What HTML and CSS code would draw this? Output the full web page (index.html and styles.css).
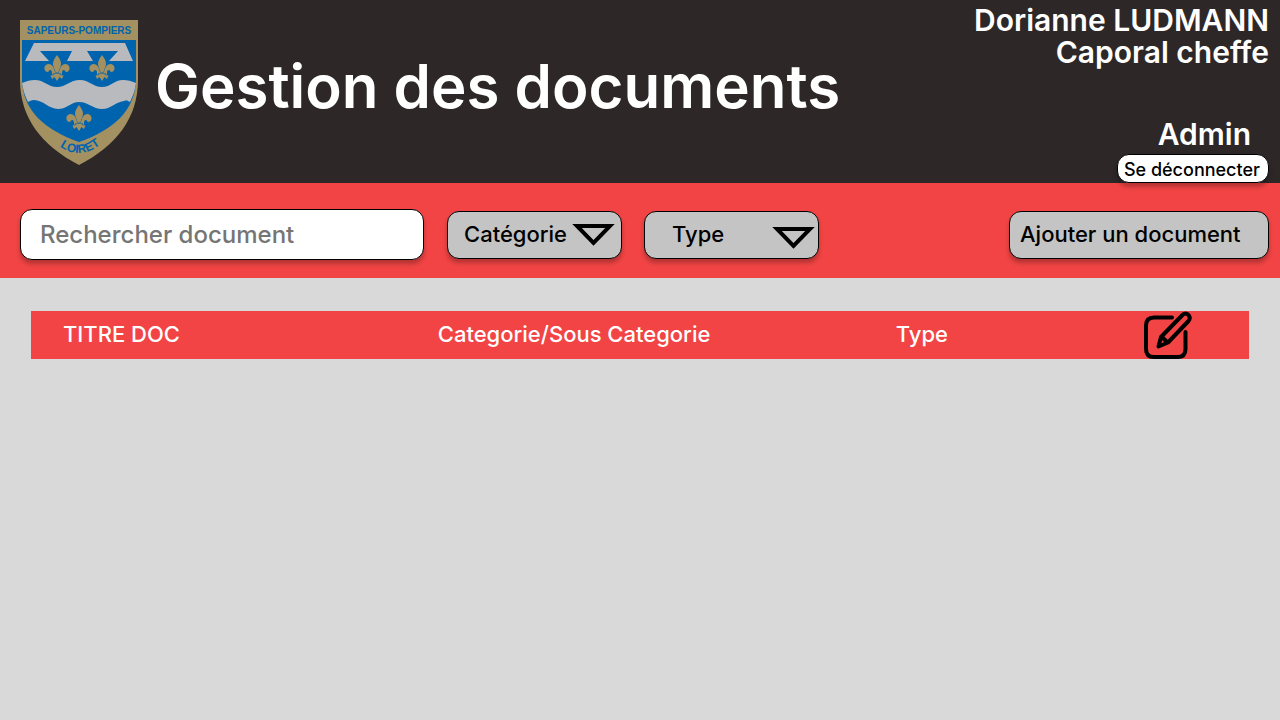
FILE: index.html
```html
<!DOCTYPE html>
<html lang="fr">
<head>
<meta charset="utf-8">
<meta name="viewport" content="width=device-width, initial-scale=1">
<title>Gestion des documents</title>
<link rel="stylesheet" href="styles.css">
</head>
<body>
<header class="header">
  <svg class="crest" viewBox="0 0 118 145" role="img" aria-label="Sapeurs-pompiers Loiret">
    <defs>
      <g id="fleur">
        <path d="M0 0C-3 4-4 6-4 9C-4 12-2 14-1.500 17H1.500C2 14 4 12 4 9C4 6 3 4 0 0Z"/>
        <path d="M-2 17C-3 12-5 9-8.500 9C-12 9-13.500 13-12 15.500C-11 17.500-8 17.500-7.500 15C-5.500 14.500-5 16-5 18H-2ZM2 17C3 12 5 9 8.500 9C12 9 13.500 13 12 15.500C11 17.500 8 17.500 7.500 15C5.500 14.500 5 16 5 18H2Z"/>
        <path d="M-5 17.500H5V19.500H-5ZM-2 19H2C3 21 4 20 6.500 20.500L5 24L2.500 22L0 26L-2.500 22L-5 24L-6.500 20.500C-4 20-3 21-2 19Z"/>
        <path d="M-4 18.500H4" stroke="#0063ae" stroke-width=".6"/>
      </g>
      <path id="loiret-curve" d="M38 125Q59 142 82 123"/>
    </defs>
    <path fill="#a39161" d="M0 0H118V60C118 98 96 126 59 145C22 126 0 98 0 60Z"/>
    <path fill="#0063ae" d="M2 20H116V60C115 91 93 110 59 122C25 110 3 91 2 60Z"/>
    <path fill="#b9babe" d="M14 23H105L113 41H89L98 31H67L73 41H47L52 31H20L29 41H5Z"/>
    <path fill="#b9babe" d="M2 63C7 61 10 60 15 60C24 60 28 67 37 67C46 67 50 60 60 60C69 60 73 67 82 67C91 67 94 60 103 60C108 60 111 61 116 63C115 70 113 76 110 82C108 81 107 80 104 81C95 82 91 89 82 89C73 89 68 82 59 82C51 82 47 89 38 89C29 89 23 80 14 80C11 80 10 81 8 82C5 76 3 70 2 63Z"/>
    <use href="#fleur" x="37" y="35" fill="#a39161"/>
    <use href="#fleur" x="82" y="35" fill="#a39161"/>
    <use href="#fleur" x="59" y="85" fill="#a39161"/>
    <text class="crest-text" x="59" y="14" text-anchor="middle">SAPEURS-POMPIERS</text>
    <text class="crest-text crest-place"><textPath href="#loiret-curve" startOffset="50%" text-anchor="middle">LOIRET</textPath></text>
  </svg>
  <h1 class="title">Gestion des documents</h1>
  <div class="account">
    <p class="user">Dorianne LUDMANN</p>
    <p class="user">Caporal cheffe</p>
    <p class="role">Admin</p>
    <button class="control logout" type="button">Se déconnecter</button>
  </div>
</header>
<form class="toolbar">
  <input class="control search" type="search" placeholder="Rechercher document" aria-label="Rechercher document">
  <div class="dropdown">
    <select class="control filter" aria-label="Catégorie"><option>Catégorie</option></select>
    <svg class="arrow" viewBox="0 0 43 22" aria-hidden="true"><path d="M5 2H38L21.500 19Z"/></svg>
  </div>
  <div class="dropdown">
    <select class="control filter filter-type" aria-label="Type"><option>Type</option></select>
    <svg class="arrow arrow-type" viewBox="0 0 43 22" aria-hidden="true"><path d="M5 2H38L21.500 19Z"/></svg>
  </div>
  <button class="control add" type="button">Ajouter un document</button>
</form>
<main class="content">
  <table class="documents">
    <colgroup><col class="col-title"><col class="col-category"><col class="col-type"><col></colgroup>
    <tbody>
      <tr>
        <td class="first">TITRE DOC</td>
        <td>Categorie/Sous Categorie</td>
        <td>Type</td>
        <td class="actions">
          <button class="edit" type="button" aria-label="Modifier">
            <svg viewBox="0 0 48 48" aria-hidden="true">
              <path d="M28 6.500H10Q2 6.500 2 14.500V38Q2 46 10 46H33.500Q41.500 46 41.500 38V21"/>
              <path d="M14.500 35.500L17 26L38.500 4Q41.500 1 44.500 4Q47 7 44.500 10L24 31.500ZM18 26L23.500 31.500"/>
            </svg>
          </button>
        </td>
      </tr>
    </tbody>
  </table>
</main>
</body>
</html>
```
FILE: styles.css
```css
* { box-sizing: border-box; }
body {
  margin: 0;
  min-height: 100vh;
  background: #d9d9d9;
  color: #000;
  font-family: Inter, "Liberation Sans", sans-serif;
  font-size: 22px;
  font-weight: 500;
}
.header {
  display: flex;
  align-items: flex-start;
  padding: 0 11px 0 20px;
  background: #2d2728;
  color: #fff;
  font-weight: 600;
}
.crest { flex: none; width: 118px; height: 145px; margin-top: 20px; }
.crest-text { fill: #0063ae; font: bold 10px "Liberation Sans", Arial, sans-serif; }
.crest-place { font-size: 12px; }
.title { margin: 48px 0 0 17px; font-size: 60px; line-height: 76px; font-weight: 600; }
.account {
  display: flex;
  flex-direction: column;
  align-items: flex-end;
  margin-left: auto;
  padding-top: 4px;
  font-size: 30px;
  line-height: 32px;
  text-align: right;
}
.user, .role { margin: 0; }
.role { margin: 50px 18px 4px 0; }
.control {
  border: 1px solid #000;
  border-radius: 12px;
  box-shadow: 0 4px 4px rgba(0, 0, 0, .25);
  background: #c4c4c4;
  color: #000;
  font: inherit;
}
.logout {
  position: relative;
  height: 29px;
  padding: 2px 8px 0 6px;
  background: #fff;
  font-size: 18px;
  line-height: 25px;
}
.logout, .add { font-weight: 500; }
.toolbar {
  display: flex;
  align-items: center;
  padding: 26px 11px 18px 20px;
  background: #f24444;
}
.search {
  flex: 0 1 404px;
  min-width: 0;
  height: 51px;
  margin-right: 1px;
  padding: 0 19px;
  appearance: none;
  background: #fff;
  font-size: 24px;
}
.search::placeholder { color: #757575; opacity: 1; }
.dropdown { position: relative; margin-left: 22px; }
.filter {
  display: block;
  width: 175px;
  height: 48px;
  padding: 0 16px 2px;
  appearance: none;
}
.filter-type { padding-left: 27px; }
.arrow {
  position: absolute;
  top: 13px;
  right: 7px;
  width: 43px;
  height: 22px;
  fill: none;
  stroke: #000;
  stroke-width: 4px;
  pointer-events: none;
}
.arrow-type { top: 16px; right: 4px; }
.add { width: 260px; height: 48px; margin-left: auto; padding: 0 10px 2px; text-align: left; }
.content { padding: 33px 31px; }
.documents {
  width: 100%;
  table-layout: fixed;
  border-collapse: collapse;
  background: #f24444;
  color: #fff;
}
.documents td { height: 48px; padding: 0 0 2px; line-height: 28px; }
.documents .first { padding-left: 32px; }
.documents .actions { padding: 0; }
.col-title { width: 33.4%; }
.col-category { width: 37.6%; }
.col-type { width: 20.4%; }
.edit { display: block; padding: 0; border: 0; background: none; }
.edit svg {
  display: block;
  width: 48px;
  height: 48px;
  fill: none;
  stroke: #000;
  stroke-width: 4px;
  stroke-linecap: round;
  stroke-linejoin: round;
}
```
